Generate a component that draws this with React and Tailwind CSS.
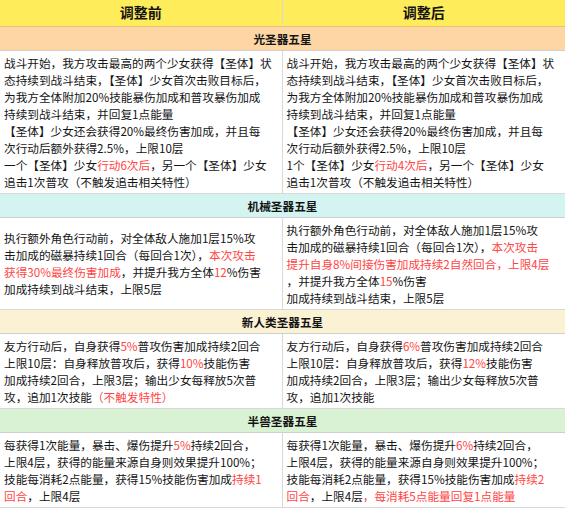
import React from 'react';

const R = ({ children }) => <span className="text-[#ff4545]">{children}</span>;

const sections = [
  {
    title: '光圣器五星',
    bg: 'bg-[#fdd6a4]',
    before: [
      <>战斗开始，我方攻击最高的两个少女获得【圣体】状</>,
      <>态持续到战斗结束，【圣体】少女首次击败目标后，</>,
      <>为我方全体附加20%技能暴伤加成和普攻暴伤加成</>,
      <>持续到战斗结束，并回复1点能量</>,
      <>【圣体】少女还会获得20%最终伤害加成，并且每</>,
      <>次行动后额外获得2.5%，上限10层</>,
      <>一个【圣体】少女<R>行动6次后</R>，另一个【圣体】少女</>,
      <>追击1次普攻（不触发追击相关特性）</>,
    ],
    after: [
      <>战斗开始，我方攻击最高的两个少女获得【圣体】状</>,
      <>态持续到战斗结束，【圣体】少女首次击败目标后，</>,
      <>为我方全体附加20%技能暴伤加成和普攻暴伤加成</>,
      <>持续到战斗结束，并回复1点能量</>,
      <>【圣体】少女还会获得20%最终伤害加成，并且每</>,
      <>次行动后额外获得2.5%，上限10层</>,
      <>1个【圣体】少女<R>行动4次后</R>，另一个【圣体】少女</>,
      <>追击1次普攻（不触发追击相关特性）</>,
    ],
  },
  {
    title: '机械圣器五星',
    bg: 'bg-[#d4f4f1]',
    before: [
      <>执行额外角色行动前，对全体敌人施加1层15%攻</>,
      <>击加成的磁暴持续1回合（每回合1次），<R>本次攻击</R></>,
      <><R>获得30%最终伤害加成</R>，并提升我方全体<R>12</R>%伤害</>,
      <>加成持续到战斗结束，上限5层</>,
    ],
    after: [
      <>执行额外角色行动前，对全体敌人施加1层15%攻</>,
      <>击加成的磁暴持续1回合（每回合1次），<R>本次攻击</R></>,
      <><R>提升自身8%间接伤害加成持续2自然回合，上限4层</R></>,
      <>，并提升我方全体<R>15</R>%伤害</>,
      <>加成持续到战斗结束，上限5层</>,
    ],
  },
  {
    title: '新人类圣器五星',
    bg: 'bg-[#fbf2d4]',
    before: [
      <>友方行动后，自身获得<R>5%</R>普攻伤害加成持续2回合</>,
      <>上限10层：自身释放普攻后，获得<R>10%</R>技能伤害</>,
      <>加成持续2回合，上限3层；输出少女每释放5次普</>,
      <>攻，追加1次技能<R>（不触发特性）</R></>,
    ],
    after: [
      <>友方行动后，自身获得<R>6%</R>普攻伤害加成持续2回合</>,
      <>上限10层：自身释放普攻后，获得<R>12%</R>技能伤害</>,
      <>加成持续2回合，上限3层；输出少女每释放5次普</>,
      <>攻，追加1次技能</>,
    ],
  },
  {
    title: '半兽圣器五星',
    bg: 'bg-[#d8f2d3]',
    before: [
      <>每获得1次能量，暴击、爆伤提升<R>5%</R>持续2回合，</>,
      <>上限4层，获得的能量来源自身则效果提升100%；</>,
      <>技能每消耗2点能量，获得15%技能伤害加成<R>持续1</R></>,
      <><R>回合</R>，上限4层</>,
    ],
    after: [
      <>每获得1次能量，暴击、爆伤提升<R>6%</R>持续2回合，</>,
      <>上限4层，获得的能量来源自身则效果提升100%；</>,
      <>技能每消耗2点能量，获得15%技能伤害加成<R>持续2</R></>,
      <><R>回合</R>，上限4层<R>，每消耗5点能量回复1点能量</R></>,
    ],
  },
];

const Lines = ({ lines }) => (
  <div className="flex flex-col">
    {lines.map((l, i) => (
      <div key={i} className="whitespace-nowrap">
        {l}
      </div>
    ))}
  </div>
);

export default function App() {
  return (
    <div className="w-[565px] h-[511px] overflow-hidden bg-white text-[#141414] font-['Noto_Sans_CJK_SC',sans-serif] text-[11.65px] leading-[17px]">
      <table className="w-[565px] table-fixed border-collapse">
        <colgroup>
          <col className="w-[282px]" />
          <col className="w-[283px]" />
        </colgroup>
        <thead>
          <tr className="h-[26px] bg-[#ffec5a] text-[14px] font-bold">
            <th className="border-r border-[#d8d8d8] border-b border-b-[#e8c27a] text-center align-middle">调整前</th>
            <th className="border-b border-b-[#e8c27a] text-center align-middle">调整后</th>
          </tr>
        </thead>
        <tbody>
          {sections.map((s) => (
            <React.Fragment key={s.title}>
              <tr className={`h-[24px] ${s.bg}`}>
                <td colSpan={2} className="border-b border-[#cfcfcf] text-center align-middle font-bold">
                  {s.title}
                </td>
              </tr>
              <tr>
                <td className="border-r border-b border-[#d8d8d8] pl-[4px] pr-[2px] py-[3px] align-middle">
                  <Lines lines={s.before} />
                </td>
                <td className="border-b border-[#d8d8d8] pl-[4px] pr-[2px] py-[3px] align-middle">
                  <Lines lines={s.after} />
                </td>
              </tr>
            </React.Fragment>
          ))}
        </tbody>
      </table>
    </div>
  );
}
